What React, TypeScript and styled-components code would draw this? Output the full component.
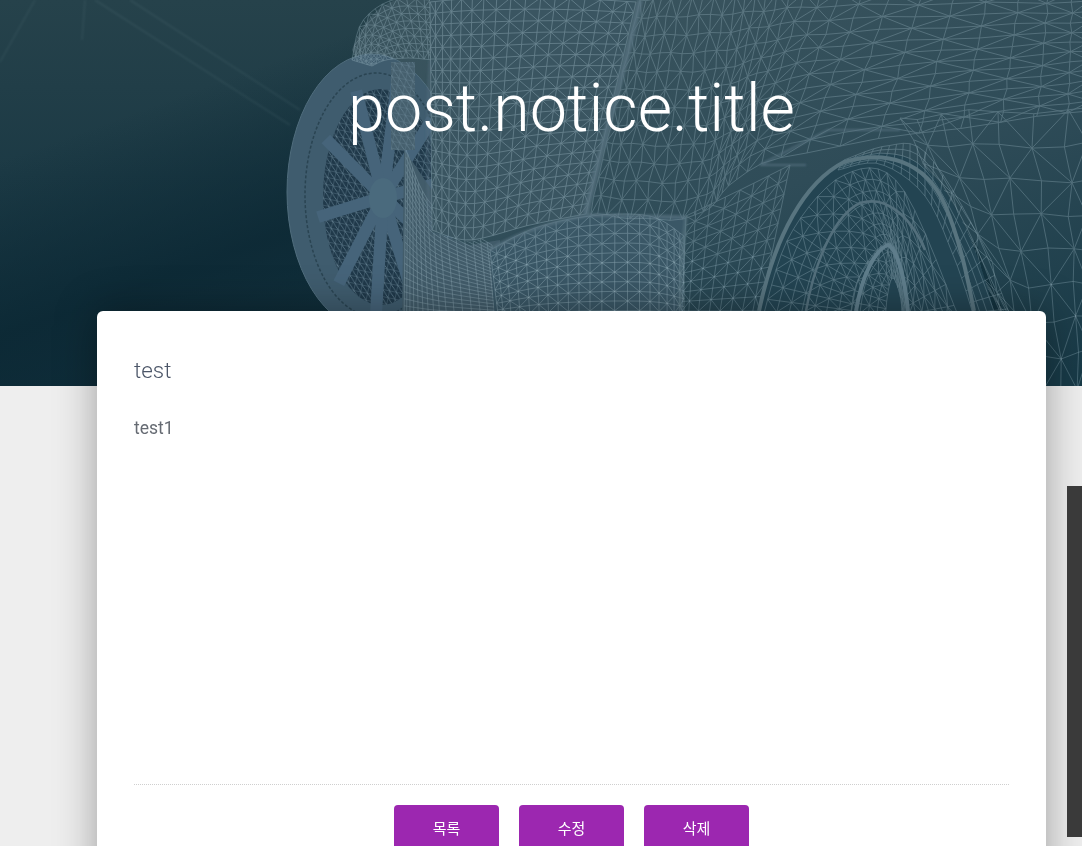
import React from "react";
import styled, { createGlobalStyle } from "styled-components";

type Pt = [number, number];

const catmull = (pts: Pt[], t: number): Pt => {
  const n = pts.length - 1;
  const s = Math.min(t * n, n - 0.0001);
  const i = Math.floor(s);
  const f = s - i;
  const p0 = pts[Math.max(i - 1, 0)];
  const p1 = pts[i];
  const p2 = pts[i + 1];
  const p3 = pts[Math.min(i + 2, n)];
  const c = (a: number, b: number, d: number, e: number) =>
    0.5 * (2 * b + (d - a) * f + (2 * a - 5 * b + 4 * d - e) * f * f + (3 * b - a - 3 * d + e) * f * f * f);
  return [c(p0[0], p1[0], p2[0], p3[0]), c(p0[1], p1[1], p2[1], p3[1])];
};

const strip = (top: Pt[], bottom: Pt[], nu: number, nv: number, diag = true, jitter = 0): string => {
  const grid: Pt[][] = [];
  for (let i = 0; i <= nu; i++) {
    const row: Pt[] = [];
    const u = i / nu;
    const a = catmull(top, u);
    const b = catmull(bottom, u);
    for (let j = 0; j <= nv; j++) {
      const v = j / nv;
      const jx = jitter * Math.sin(i * 12.9 + j * 78.2);
      const jy = jitter * Math.sin(i * 39.3 + j * 11.7);
      row.push([a[0] + (b[0] - a[0]) * v + jx, a[1] + (b[1] - a[1]) * v + jy]);
    }
    grid.push(row);
  }
  const f = (p: Pt) => `${p[0].toFixed(1)} ${p[1].toFixed(1)}`;
  let d = "";
  for (let i = 0; i <= nu; i++) {
    for (let j = 0; j <= nv; j++) {
      if (j < nv) d += `M${f(grid[i][j])}L${f(grid[i][j + 1])}`;
      if (i < nu) d += `M${f(grid[i][j])}L${f(grid[i + 1][j])}`;
      if (diag && i < nu && j < nv) {
        d += (i + j) % 2 === 0
          ? `M${f(grid[i][j])}L${f(grid[i + 1][j + 1])}`
          : `M${f(grid[i + 1][j])}L${f(grid[i][j + 1])}`;
      }
    }
  }
  return d;
};

const panelA = strip(
  [[430, 2], [480, -2], [560, -2], [636, 2]],
  [[432, 230], [470, 240], [530, 225], [586, 214]],
  17, 20
);
const panelArch = strip(
  [[352, 60], [362, 22], [392, 0], [430, 0]],
  [[372, 66], [386, 60], [410, 58], [432, 60]],
  14, 8, true
);
const panelRib = strip(
  [[406, 150], [432, 205], [492, 245]],
  [[404, 320], [440, 320], [500, 320]],
  16, 24, false
);
const panelB = strip(
  [[640, 0], [725, -4], [840, -8], [1090, -8]],
  [[590, 214], [695, 216], [780, 158], [1090, 110]],
  27, 12, true, 1
);
const panelBLow = strip(
  [[686, 216], [740, 190], [790, 165]],
  [[682, 311], [720, 311], [760, 311]],
  8, 10, true
);
const panelRight = strip(
  [[900, 118], [980, 112], [1090, 110]],
  [[1000, 311], [1040, 386], [1090, 386]],
  7, 8, true, 3
);
const bulge = strip(
  [[490, 250], [535, 228], [590, 216], [650, 216], [684, 236]],
  [[500, 330], [540, 330], [590, 330], [650, 330], [684, 330]],
  20, 12, true
);
const tread = strip(
  [[844, 160], [886, 146], [925, 152], [975, 230], [1012, 320]],
  [[838, 170], [880, 164], [925, 196], [955, 260], [975, 320]],
  22, 5, false
);
const wheelInner = strip(
  [[762, 320], [790, 235], [844, 175], [900, 185], [960, 320]],
  [[850, 320], [858, 280], [886, 245], [900, 265], [910, 320]],
  26, 7, true
);
const hubRing = strip(
  [[850, 320], [860, 275], [886, 243], [900, 262], [910, 320]],
  [[885, 320], [888, 292], [893, 278], [900, 295], [903, 320]],
  18, 4, true
);

const spokeAngles = [-78, -42, -8, 28, 62, 96, 132, 170, 210, 246];
const spokes = spokeAngles.map((a) => {
  const r = (a * Math.PI) / 180;
  return { x: 383 + 66 * Math.cos(r), y: 197 + 116 * Math.sin(r) };
});

const GlobalStyle = createGlobalStyle`
  html, body {
    margin: 0;
    padding: 0;
    height: 846px;
    overflow: hidden;
    background: #eeeeee;
  }
`;

const Page = styled.div`
  width: 1143px;
  height: 846px;
  overflow: hidden;
  font-family: Roboto, "Noto Sans CJK KR", sans-serif;
  background: #eeeeee;
`;

const Hero = styled.header`
  position: relative;
  height: 386px;
  overflow: hidden;
  background:
    linear-gradient(160deg, rgba(10, 38, 50, 0) 20%, rgba(10, 38, 50, 0.75) 42%, rgba(10, 38, 50, 0.2) 68%),
    linear-gradient(180deg, #26424b 0%, #1c3a45 45%, #12323f 100%);
`;

const Art = styled.svg`
  position: absolute;
  inset: 0;
`;

const HeroTitle = styled.h1`
  position: relative;
  margin: 0;
  padding-top: 66px;
  text-align: center;
  font-size: 66.5px;
  line-height: 84px;
  font-weight: 300;
  color: #ffffff;
`;

const Card = styled.main`
  position: relative;
  margin: -75px 97px 0;
  height: 620px;
  padding: 0 37px;
  border-radius: 6px;
  background: #ffffff;
  box-shadow: 0 0 42px rgba(0, 0, 0, 0.34);
`;

const PostTitle = styled.h2`
  margin: 0;
  padding-top: 45px;
  font-size: 22.4px;
  line-height: 29px;
  font-weight: 300;
  color: #4c5668;
`;

const PostBody = styled.div`
  height: 369px;
  padding-top: 30px;
  font-size: 17.5px;
  line-height: 27px;
  font-weight: 400;
  color: #666b73;
`;

const Divider = styled.hr`
  margin: 0;
  border: 0;
  border-top: 1px dotted #cfcfcf;
`;

const Actions = styled.div`
  display: flex;
  justify-content: center;
  gap: 20px;
  margin-top: 20px;
`;

const ActionButton = styled.button`
  width: 105px;
  height: 48px;
  padding: 0 0 3px;
  border: 0;
  border-radius: 4px;
  background: #9c27b0;
  color: #ffffff;
  font-family: "Noto Sans CJK KR", sans-serif;
  font-size: 15px;
`;

const SideTab = styled.div`
  position: fixed;
  left: 1067px;
  top: 486px;
  width: 15px;
  height: 351px;
  background: #3a3a3a;
`;

const WHEEL_WELL = "M758 311C775 235 805 180 844 160C885 146 925 152 950 200C975 240 985 280 994 311Z";

export default function App() {
  return (
    <Page>
      <GlobalStyle />
      <Hero>
        <Art width={1143} height={386} viewBox="0 0 1143 386" aria-hidden="true">
          <defs>
            <linearGradient id="bodyFill" x1="0.2" y1="0" x2="0.85" y2="1">
              <stop offset="0" stopColor="#3a545e" />
              <stop offset="0.5" stopColor="#2f4c58" />
              <stop offset="1" stopColor="#183a47" />
            </linearGradient>
            <pattern id="fineMesh" width="7" height="7" patternUnits="userSpaceOnUse" patternTransform="rotate(12)">
              <path d="M0 0H7M0 0V7M0 0L7 7" stroke="#7d9bab" strokeWidth="0.7" fill="none" />
            </pattern>
            <filter id="soft">
              <feGaussianBlur stdDeviation="1.2" />
            </filter>
          </defs>

          <g stroke="#a8c6c8" fill="none" opacity="0.09" filter="url(#soft)">
            <path d="M35 0L0 62M85 0L82 40M95 0L290 125M130 0L300 110" strokeWidth="1.5" />
          </g>

          <path
            d="M352 50C362 22 378 6 396 0H1143V386H1030C1015 340 995 290 975 240L900 311H700V311H430L420 200Z"
            fill="url(#bodyFill)"
          />
          <path d={WHEEL_WELL} fill="#1f4251" />

          <ellipse cx="372" cy="192" rx="85" ry="138" fill="#3f5c6e" />
          <ellipse cx="372" cy="192" rx="85" ry="138" fill="none" stroke="#506d7d" strokeWidth="1" />
          <ellipse cx="376" cy="195" rx="71" ry="122" fill="none" stroke="#2a4452" strokeWidth="1.5" strokeDasharray="3 2" />
          <ellipse cx="381" cy="197" rx="58" ry="108" fill="#20394a" />
          <ellipse cx="381" cy="197" rx="58" ry="108" fill="url(#fineMesh)" opacity="0.8" />
          <g stroke="#46647a" strokeWidth="12">
            {spokes.map((s, i) => (
              <line key={i} x1={383} y1={197} x2={s.x} y2={s.y} />
            ))}
          </g>
          <ellipse cx="383" cy="198" rx="14" ry="20" fill="#4a6a7d" />

          <path d="M404 150L432 190L432 232L470 245L500 240V320H402Z" fill="#425c6a" />
          <g fill="none" stroke="#9ab4c0" strokeWidth="0.7" opacity="0.5">
            <path d={panelArch} />
            <path d={panelRib} />
          </g>
          <rect x="391" y="62" width="24" height="88" fill="#46606e" />
          <rect x="391" y="62" width="24" height="88" fill="url(#fineMesh)" opacity="0.6" />

          <path d="M430 0H636L586 214L530 225L470 242L432 232Z" fill="#3a5561" />
          <path d="M490 250C510 235 550 222 590 215L686 217L682 320H495Z" fill="#3a5766" />

          <g fill="none" stroke="#9db8c3" strokeWidth="0.8" opacity="0.48">
            <path d={panelA} />
            <path d={bulge} />
          </g>
          <g fill="none" stroke="#9db8c3" strokeWidth="0.9" opacity="0.36">
            <path d={panelB} />
            <path d={panelBLow} />
            <path d={panelRight} />
          </g>

          <path d={WHEEL_WELL} fill="#234452" />
          <g fill="none" stroke="#9db8c3" strokeWidth="0.7" opacity="0.48">
            <path d={wheelInner} />
            <path d={tread} />
            <path d={hubRing} />
          </g>
          <path d="M759 311C775 235 805 182 844 162C885 150 925 160 945 205C960 240 968 280 974 311" fill="none" stroke="#58747f" strokeWidth="4" />
          <path d="M806 311C815 260 835 215 860 203C885 195 910 215 925 250" fill="none" stroke="#536f7c" strokeWidth="2.5" />
          <path d="M856 311C862 275 875 250 888 245C898 250 905 280 908 311" fill="none" stroke="#5f7d8b" strokeWidth="4" />

          <g fill="none" stroke="#587481" filter="url(#soft)">
            <path d="M640 0C625 70 600 150 586 214" strokeWidth="6" opacity="0.75" />
            <path d="M490 250C520 232 550 222 590 215L686 217" strokeWidth="3.5" opacity="0.7" />
            <path d="M686 217C682 250 680 285 680 311" strokeWidth="3.5" opacity="0.6" />
            <path d="M430 60C426 140 428 220 432 232" strokeWidth="3" opacity="0.4" />
            <path d="M806 165L760 165L828 130H900" strokeWidth="2" opacity="0.7" />
          </g>
        </Art>
        <HeroTitle>post.notice.title</HeroTitle>
      </Hero>
      <Card>
        <PostTitle>test</PostTitle>
        <PostBody>test1</PostBody>
        <Divider />
        <Actions>
          <ActionButton>목록</ActionButton>
          <ActionButton>수정</ActionButton>
          <ActionButton>삭제</ActionButton>
        </Actions>
      </Card>
      <SideTab />
    </Page>
  );
}
